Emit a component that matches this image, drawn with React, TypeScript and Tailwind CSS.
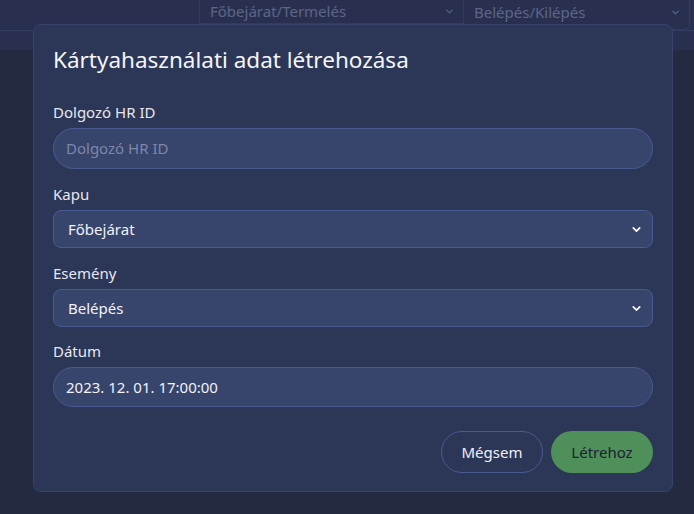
import { ChevronDown } from 'lucide-react';

const font = { fontFamily: '"Noto Sans", "Open Sans", sans-serif' };

function Label({ text }: { text: string }) {
  return <label className="block text-[15px] leading-5 text-[#e6e8f0] mb-[6px]">{text}</label>;
}

function SelectBox({ value }: { value: string }) {
  return (
    <div className="flex items-center justify-between h-[38px] rounded-lg border border-[#4a5a92] bg-[#37446c] pl-[14px] pr-[9px]">
      <span className="text-[15px] text-[#f1f3f8]">{value}</span>
      <ChevronDown size={13} strokeWidth={3} className="text-white" />
    </div>
  );
}

export default function App() {
  return (
    <div className="relative w-[694px] h-[514px] overflow-hidden bg-[#232a42]" style={font}>
      {/* dimmed page behind the dialog */}
      <div className="h-[50px] bg-[#29304f]">
        <div className="flex h-[31px] border-b border-[#333c5e]">
          <div className="w-[199px]" />
          <div className="w-[264px] h-[24px] flex items-center justify-between border-l border-b border-[#333c5e] pl-[10px] pr-[8px]">
            <span className="text-[15px] text-[#5c6688]">Főbejárat/Termelés</span>
            <ChevronDown size={11} strokeWidth={2.5} className="text-[#5c6688]" />
          </div>
          <div className="w-[227px] h-[30px] flex items-start justify-between border-l border-r border-b border-[#333c5e] rounded-br-md pl-[10px] pr-[8px]">
            <span className="text-[15px] leading-[24px] text-[#5c6688]">Belépés/Kilépés</span>
            <ChevronDown size={11} strokeWidth={2.5} className="text-[#5c6688] mt-[7px]" />
          </div>
        </div>
      </div>

      {/* dialog */}
      <div className="absolute left-[33px] top-[24px] w-[640px] h-[468px] rounded-lg border border-[#38426a] bg-[#2c3656] px-[19px] pt-[18px]">
        <h2 className="text-[22.5px] leading-[34px] text-[#f4f5f9] mb-[25px]">Kártyahasználati adat létrehozása</h2>

        <div className="mb-[15px]">
          <Label text="Dolgozó HR ID" />
          <div className="flex items-center h-[41px] rounded-full border border-[#4a5a92] bg-[#37446c] px-[12px]">
            <span className="text-[15px] text-[#7d87a8]">Dolgozó HR ID</span>
          </div>
        </div>

        <div className="mb-[15px]">
          <Label text="Kapu" />
          <SelectBox value="Főbejárat" />
        </div>

        <div className="mb-[14px]">
          <Label text="Esemény" />
          <SelectBox value="Belépés" />
        </div>

        <div>
          <Label text="Dátum" />
          <div className="flex items-center h-[40px] rounded-full border border-[#4a5a92] bg-[#37446c] px-[12px]">
            <span className="text-[15px] text-[#f1f3f8]">2023. 12. 01. 17:00:00</span>
          </div>
        </div>

        <div className="flex justify-end gap-[8px] mt-[24px]">
          <button className="w-[102px] h-[42px] rounded-full border border-[#4a5a92] text-[15px] text-[#eef0f6]">
            Mégsem
          </button>
          <button className="w-[102px] h-[42px] rounded-full bg-[#4f905a] text-[15px] text-[#1c2233]">
            Létrehoz
          </button>
        </div>
      </div>
    </div>
  );
}
